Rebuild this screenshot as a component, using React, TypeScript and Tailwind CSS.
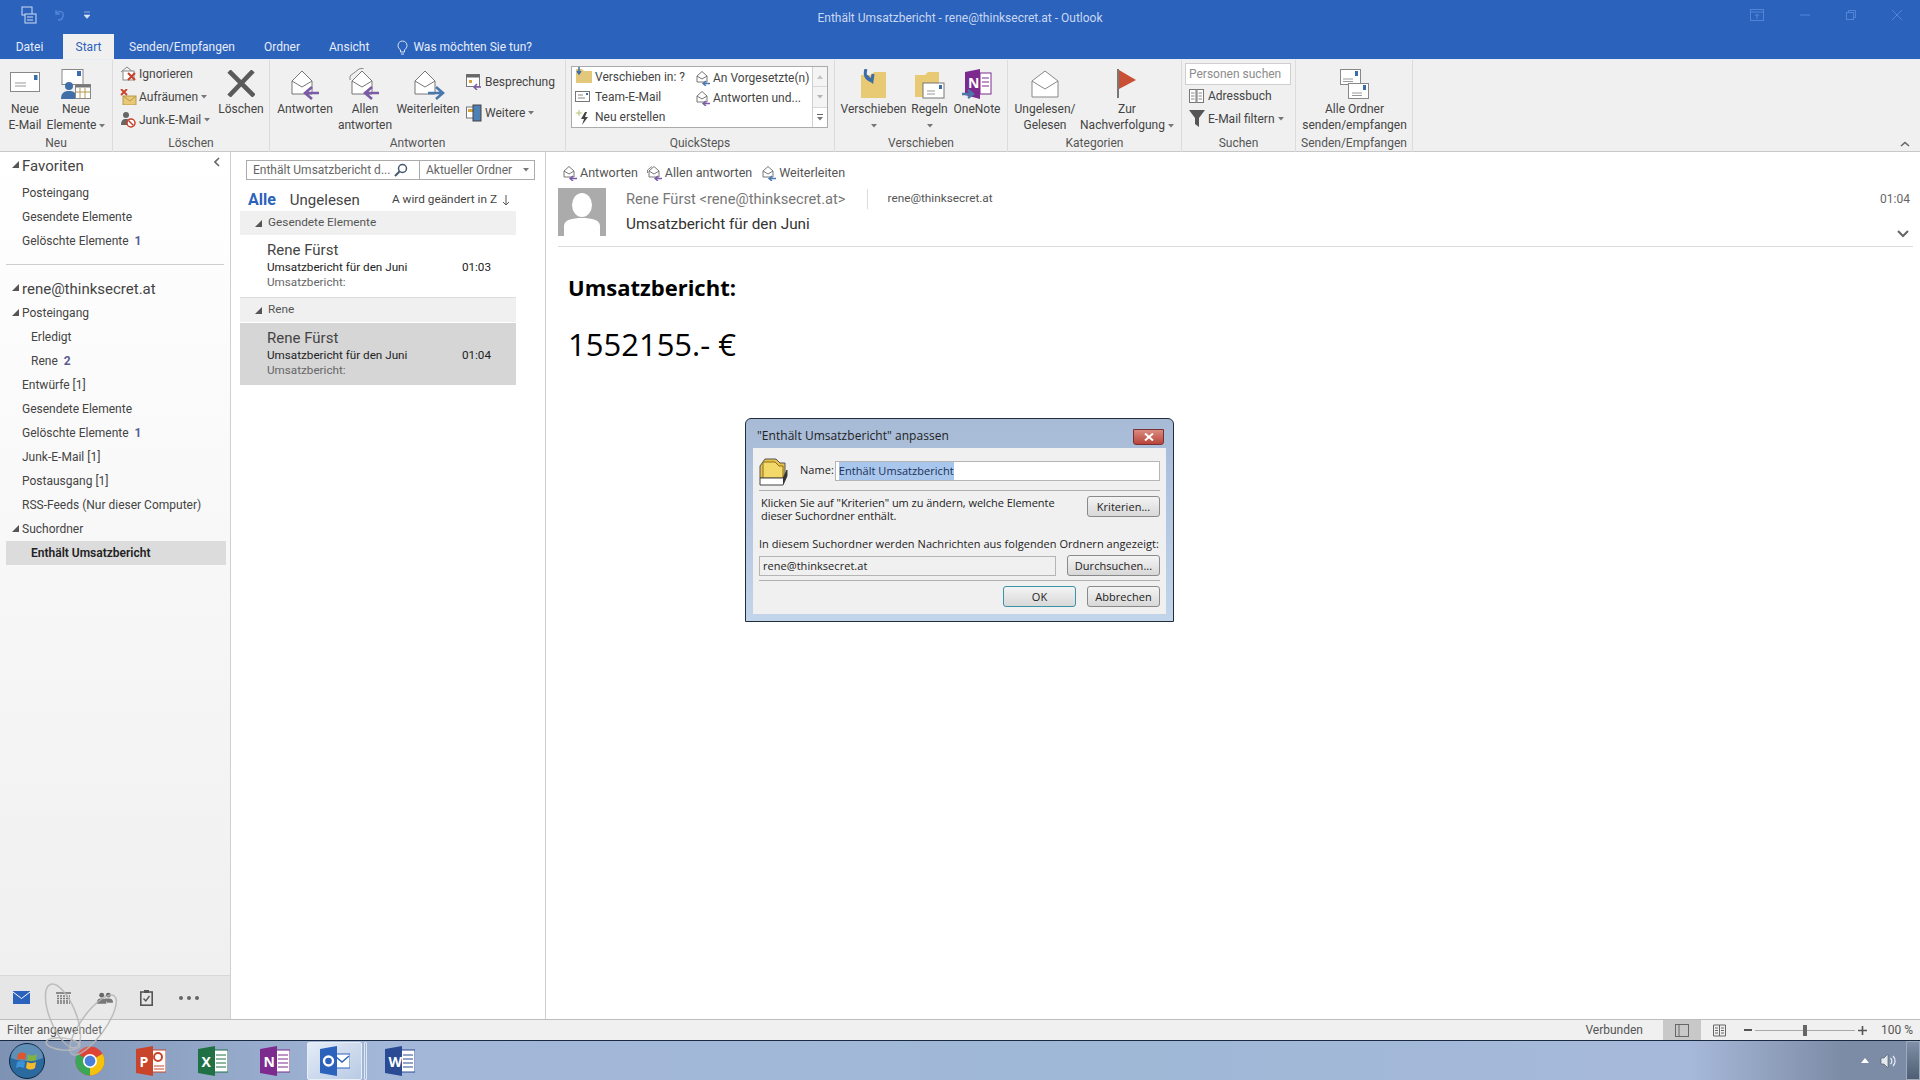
import type { ReactNode } from "react";

function Tri() {
  return (
    <svg width="7" height="7" viewBox="0 0 7 7" className="shrink-0">
      <path d="M7 0V7H0Z" fill="#555" />
    </svg>
  );
}

function Caret({ className = "" }: { className?: string }) {
  return (
    <svg width="6" height="4" viewBox="0 0 6 4" className={`inline-block ${className}`}>
      <path d="M0 0H6L3 3.5Z" fill="#777" />
    </svg>
  );
}

function Env({ arrow, all }: { arrow?: "reply" | "fwd"; all?: boolean }) {
  return (
    <svg width="34" height="32" viewBox="0 0 34 32">
      {all && <path d="M2 12V8L11 1L16 0" fill="none" stroke="#888" />}
      <path d="M4 13L14 3L24 13V26H4Z" fill="#fff" stroke="#777" />
      <path d="M4 13L14 19L24 13" fill="none" stroke="#777" />
      {arrow === "reply" && <path d="M31 25H19M24 19L17 25L24 31" fill="none" stroke="#7b5ba6" strokeWidth="2.6" />}
      {arrow === "fwd" && <path d="M17 25H30M25 19L32 25L25 31" fill="none" stroke="#4a78ad" strokeWidth="2.6" />}
    </svg>
  );
}

function MiniEnv({ arrow, all }: { arrow: string; all?: boolean }) {
  return (
    <svg width="16" height="16" viewBox="0 0 16 16" className="shrink-0">
      {all && <path d="M0.5 8V5L5 1.5" fill="none" stroke="#888" />}
      <path d="M2 6L7 1.5L12 6V12H2Z" fill="#fff" stroke="#777" />
      <path d="M2 6L7 9L12 6" fill="none" stroke="#777" />
      <path d="M8 13.5H15M11 11L8 13.5L11 16" fill="none" stroke={arrow} strokeWidth="1.4" />
    </svg>
  );
}

function Mail({ w = 30, h = 20 }: { w?: number; h?: number }) {
  return (
    <svg width={w} height={h} viewBox="0 0 30 20" className="-mt-[3px]">
      <rect x="0.5" y="0.5" width="29" height="19" fill="#fff" stroke="#888" />
      <rect x="24" y="3" width="3.5" height="5" fill="#3b6cab" />
      <path d="M5 11H16M5 14H16" stroke="#999" />
    </svg>
  );
}

function Big({ w, label, icon, caret, line2 }: { w: number; label: ReactNode; icon: ReactNode; caret?: boolean; line2?: ReactNode }) {
  return (
    <div className="flex flex-col items-center shrink-0" style={{ width: w }}>
      <div className="h-[35px] flex items-center justify-center">{icon}</div>
      <div className="leading-[16px] text-center whitespace-nowrap">{label}</div>
      <div className="leading-[16px] text-center whitespace-nowrap h-[16px]">
        {line2} {caret && <Caret className="align-middle" />}
      </div>
    </div>
  );
}

function Small({ icon, label, caret }: { icon: ReactNode; label: string; caret?: boolean }) {
  return (
    <div className="flex items-center h-[23px] whitespace-nowrap">
      <div className="w-[19px] flex items-center shrink-0">{icon}</div>
      <span>{label}</span>
      {caret && <Caret className="ml-[3px]" />}
    </div>
  );
}

function Group({ w, label, children, border = true }: { w: number; label: string; children: ReactNode; border?: boolean }) {
  return (
    <div className={`shrink-0 flex flex-col h-[92px] ${border ? "border-r border-[#dcdcdc]" : ""}`} style={{ width: w }}>
      <div className="h-[75px] pt-[6px] flex">{children}</div>
      <div className="text-center text-[#555] leading-[16px]">{label}</div>
    </div>
  );
}

function Ribbon() {
  return (
    <div className="h-[93px] bg-[#f0f0f0] border-b border-[#c8c8c8] flex text-[12px] text-[#444] border-t border-t-[#e8ecf6] relative">
      <Group w={113} label="Neu">
        <Big w={50} label="Neue" line2="E-Mail" icon={<Mail />} />
        <Big w={52} label="Neue" line2="Elemente" caret icon={
          <svg width="30" height="30" viewBox="0 0 30 30">
            <rect x="1" y="0.5" width="21" height="15" fill="#fff" stroke="#888" />
            <rect x="16" y="2" width="4" height="5" fill="#3b6cab" />
            <circle cx="8" cy="17" r="4" fill="#3f6ea8" />
            <path d="M0 30C0 23 4 22 8 22S16 23 16 30Z" fill="#3f6ea8" />
            <rect x="14.5" y="15.5" width="15" height="14" fill="#fff" stroke="#888" />
            <rect x="14.5" y="15.5" width="15" height="3" fill="#777" />
            <path d="M19 19V29M24 19V29M15 23H29" stroke="#b79a4e" />
          </svg>
        } />
      </Group>
      <Group w={157} label="Löschen">
        <div className="w-[100px] pl-[7px] -mt-[4px] shrink-0">
          <Small label="Ignorieren" icon={
            <svg width="17" height="15" viewBox="0 0 17 15"><path d="M1 6L7 1L13 6" fill="none" stroke="#888" /><rect x="3" y="5" width="11" height="9" fill="#fff" stroke="#888" /><path d="M8 7L15 14M15 7L8 14" stroke="#c8402a" strokeWidth="2" /></svg>
          } />
          <Small label="Aufräumen" caret icon={
            <svg width="17" height="16" viewBox="0 0 17 16"><rect x="3" y="7" width="13" height="9" fill="#e9c877" stroke="#b79a4e" /><path d="M1 0L7 6M7 0L1 6" stroke="#c8402a" strokeWidth="1.8" /><path d="M3 7L10 12L16 7" fill="none" stroke="#b79a4e" /></svg>
          } />
          <Small label="Junk-E-Mail" caret icon={
            <svg width="17" height="17" viewBox="0 0 17 17"><circle cx="6" cy="4" r="3" fill="#666" /><path d="M1 14C1 9 3 8 6 8S10 9 10 12V14Z" fill="#666" /><circle cx="11" cy="12" r="4" fill="#fff" stroke="#c8402a" strokeWidth="1.5" /><path d="M8.5 9.5L13.5 14.5" stroke="#c8402a" strokeWidth="1.5" /></svg>
          } />
        </div>
        <Big w={56} label="Löschen" icon={
          <svg width="28" height="27" viewBox="0 0 28 27"><path d="M2 1L27 26M26 1L2 26" stroke="#5a5a5a" strokeWidth="4.6" /></svg>
        } />
      </Group>
      <Group w={296} label="Antworten">
        <Big w={70} label="Antworten" icon={<Env arrow="reply" />} />
        <Big w={50} label="Allen" line2="antworten" icon={<Env arrow="reply" all />} />
        <Big w={76} label="Weiterleiten" icon={<Env arrow="fwd" />} />
        <div className="pt-[4px]">
          <Small label="Besprechung" icon={
            <svg width="16" height="16" viewBox="0 0 16 16"><rect x="0.5" y="0.5" width="13" height="12" fill="#fff" stroke="#777" /><rect x="0.5" y="0.5" width="13" height="3" fill="#666" /><rect x="3" y="6" width="3" height="3" fill="#d6a437" /><path d="M15 13H8M11 10L8 13L11 16" fill="none" stroke="#7b5ba6" strokeWidth="1.5" /></svg>
          } />
          <div className="h-[8px]" />
          <Small label="Weitere" caret icon={
            <svg width="16" height="18" viewBox="0 0 16 18"><rect x="0.5" y="3" width="8" height="11" fill="#fff" stroke="#777" /><rect x="2" y="5" width="5" height="3" fill="#d6a437" /><rect x="7" y="1" width="8" height="16" fill="#4e7fb5" stroke="#444" /></svg>
          } />
        </div>
      </Group>
      <Group w={269} label="QuickSteps">
        <div className="ml-[5px] w-[257px] h-[62px] bg-white border border-[#ababab] flex">
          <div className="w-[120px] shrink-0 pl-[3px] flex flex-col justify-center">
            <div className="flex items-center h-[20px]"><svg width="19" height="17" viewBox="0 0 19 17" className="shrink-0 mr-[1px] -mt-[3px]"><path d="M1 2H7L9 4H17V16H1Z" fill="#e3c77a" /><path d="M4 0V6M2 4L4 7L6 4" fill="none" stroke="#3b6cab" strokeWidth="1.5" /></svg>Verschieben in: ?</div>
            <div className="flex items-center h-[20px]"><svg width="19" height="12" viewBox="0 0 19 12" className="shrink-0 mr-[1px]"><rect x="0.5" y="0.5" width="14" height="10" fill="#fff" stroke="#777" /><path d="M3 4H8M3 7H10" stroke="#888" /><rect x="11" y="2" width="2" height="2" fill="#3b6cab" /></svg>Team-E-Mail</div>
            <div className="flex items-center h-[20px]"><svg width="19" height="16" viewBox="0 0 19 16" className="shrink-0 mr-[1px]"><path d="M4 0L5 3L8 4L5 5L4 8L3 5L0 4L3 3Z" fill="#c9d39a" /><path d="M10 3L6 10H9L7 16L13 8H10L12 3Z" fill="#444" /></svg>Neu erstellen</div>
          </div>
          <div className="flex-1 pl-[3px] flex flex-col pt-[1px]">
            <div className="flex items-center h-[20px] gap-[2px]"><MiniEnv arrow="#4a78ad" />An Vorgesetzte(n)</div>
            <div className="flex items-center h-[20px] gap-[2px]"><MiniEnv arrow="#7b5ba6" />Antworten und...</div>
          </div>
          <div className="w-[15px] border-l border-[#d0d0d0] flex flex-col shrink-0 bg-[#f4f4f4]">
            <div className="flex-1 border-b border-[#d8d8d8] flex items-center justify-center"><svg width="6" height="4" viewBox="0 0 6 4"><path d="M0 4H6L3 0Z" fill="#c4c4c4" /></svg></div>
            <div className="flex-1 border-b border-[#d8d8d8] flex items-center justify-center"><Caret className="opacity-50" /></div>
            <div className="flex-1 flex flex-col items-center justify-center gap-[2px] bg-white"><div className="w-[6px] h-px bg-[#666]" /><Caret /></div>
          </div>
        </div>
      </Group>
      <Group w={173} label="Verschieben">
        <Big w={77} label="Verschieben" caret icon={
          <svg width="30" height="30" viewBox="0 0 30 30"><path d="M2 6H12L15 3H27V29H2Z" fill="#e8c974" /><path d="M7 0C5 6 7 10 13 12M6 6L13 12L14 5" fill="none" stroke="#3d6da6" strokeWidth="3" /></svg>
        } />
        <Big w={35} label="Regeln" caret icon={
          <svg width="30" height="30" viewBox="0 0 30 30"><path d="M0 6H10L13 3H24V28H0Z" fill="#e8c974" /><rect x="8" y="14" width="21" height="15" fill="#fff" stroke="#777" /><path d="M12 22H20M12 25H20" stroke="#999" /><rect x="24" y="16" width="3" height="4" fill="#3b6cab" /></svg>
        } />
        <Big w={60} label="OneNote" icon={
          <svg width="30" height="30" viewBox="0 0 30 30"><path d="M3 3L18 0V30L3 26Z" fill="#7d2a8e" /><rect x="18" y="4" width="11" height="21" fill="#fff" stroke="#7d2a8e" /><path d="M20 9H27M20 13H27M20 17H27" stroke="#7d2a8e" /><text x="6" y="19" fontSize="14" fontWeight="700" fill="#fff" fontFamily="Open Sans">N</text><path d="M0 25H10M6 21L11 25L6 29" fill="none" stroke="#4a78ad" strokeWidth="2.4" /></svg>
        } />
      </Group>
      <Group w={174} label="Kategorien">
        <Big w={74} label="Ungelesen/" line2="Gelesen" icon={
          <svg width="28" height="28" viewBox="0 0 28 28"><path d="M1 11L14 1L27 11V27H1Z" fill="#fff" stroke="#888" /><path d="M1 11L14 19L27 11" fill="none" stroke="#888" /></svg>
        } />
        <Big w={90} label="Zur" line2="Nachverfolgung" caret icon={
          <svg width="22" height="30" viewBox="0 0 22 30"><path d="M2 0V29" stroke="#777" strokeWidth="2" /><path d="M3 1L20 11L3 20Z" fill="#c94f35" /></svg>
        } />
      </Group>
      <Group w={114} label="Suchen">
        <div className="pl-[3px] flex flex-col -mt-[3px]">
          <div className="w-[106px] h-[22px] bg-white border border-[#cfcfcf] pl-[3px] leading-[20px] text-[#8c8c8c]">Personen suchen</div>
          <div className="pl-[4px] -mt-[1px]">
            <Small label="Adressbuch" icon={
              <svg width="16" height="14" viewBox="0 0 16 14"><rect x="0.5" y="0.5" width="6.5" height="13" fill="#fff" stroke="#777" /><rect x="8" y="0.5" width="6.5" height="13" fill="#fff" stroke="#777" /><path d="M2 4H5.5M2 7H5.5M2 10H5.5M9.5 4H13M9.5 7H13M9.5 10H13" stroke="#888" /></svg>
            } />
            <Small label="E-Mail filtern" caret icon={
              <svg width="16" height="17" viewBox="0 0 16 17"><path d="M0 0H16L10 8V17L6 14V8Z" fill="#555" /></svg>
            } />
          </div>
        </div>
      </Group>
      <Group w={117} label="Senden/Empfangen">
        <Big w={117} label="Alle Ordner" line2="senden/empfangen" icon={
          <svg width="30" height="30" viewBox="0 0 30 30"><rect x="0.5" y="0.5" width="20" height="15" fill="#fff" stroke="#888" /><rect x="15" y="2" width="3" height="5" fill="#3b6cab" /><path d="M3 10H13M3 12.5H13" stroke="#999" /><rect x="8.5" y="14.5" width="20" height="15" fill="#fff" stroke="#888" /><rect x="23" y="16" width="3" height="5" fill="#3b6cab" /><path d="M12 24H22M12 26.5H22" stroke="#999" /></svg>
        } />
      </Group>
      <svg width="10" height="6" viewBox="0 0 10 6" className="absolute right-[10px] top-[81px]"><path d="M1 5L5 1.5L9 5" fill="none" stroke="#666" strokeWidth="1.6" /></svg>
    </div>
  );
}

function TitleBar() {
  return (
    <div className="h-[59px] bg-[#2b62bb] text-white relative shrink-0">
      <div className="h-[29px] flex items-center relative">
        <svg width="18" height="18" viewBox="0 0 18 18" className="ml-[20px]"><rect x="2" y="1" width="10" height="8" fill="none" stroke="#cfdcf2" /><rect x="5" y="8" width="11" height="9" fill="#2b62bb" stroke="#cfdcf2" /><path d="M7 11H13M7 14H13" stroke="#cfdcf2" /></svg>
        <svg width="12" height="12" viewBox="0 0 12 12" className="ml-[15px]"><path d="M3 5C5 1 11 2 10 7S6 11 5 11M3 1V5H7" fill="none" stroke="#5285d8" strokeWidth="1.4" /></svg>
        <svg width="6" height="8" viewBox="0 0 6 8" className="ml-[19px]"><path d="M0 1H6M0 4H6L3 7.5Z" fill="#dbe5f5" stroke="#dbe5f5" strokeWidth="0.6" /></svg>
        <div className="absolute left-0 right-0 text-center text-[12px] text-[#c9d8f2] top-[9px] leading-[18px]">Enthält Umsatzbericht - rene@thinksecret.at - Outlook</div>
        <div className="ml-auto flex items-center gap-[36px] pr-[18px]">
          <svg width="14" height="12" viewBox="0 0 14 12"><rect x="0.5" y="0.5" width="13" height="11" fill="none" stroke="#5285d8" /><path d="M0 3H14M7 10V5M5 7L7 5L9 7" fill="none" stroke="#5285d8" /></svg>
          <svg width="10" height="2" viewBox="0 0 10 2"><path d="M0 1H10" stroke="#5285d8" /></svg>
          <svg width="10" height="10" viewBox="0 0 10 10"><rect x="0.5" y="2.5" width="7" height="7" fill="none" stroke="#5285d8" /><path d="M2.5 2.5V0.5H9.5V7.5H7.5" fill="none" stroke="#5285d8" /></svg>
          <svg width="10" height="10" viewBox="0 0 10 10"><path d="M0 0L10 10M10 0L0 10" stroke="#5285d8" /></svg>
        </div>
      </div>
      <div className="h-[30px] flex text-[12px] text-[#e6edf9] items-end">
        <div className="w-[59px] text-center h-[25px] leading-[26px]">Datei</div>
        <div className="ml-[4px] w-[51px] text-center h-[25px] leading-[26px] bg-[#f0f0f0] text-[#2b62bb]">Start</div>
        <div className="ml-[15px] h-[25px] leading-[26px]">Senden/Empfangen</div>
        <div className="ml-[29px] h-[25px] leading-[26px]">Ordner</div>
        <div className="ml-[29px] h-[25px] leading-[26px]">Ansicht</div>
        <div className="ml-[28px] h-[25px] flex items-center gap-[5px] pt-[1px]">
          <svg width="11" height="15" viewBox="0 0 11 15"><path d="M3.5 10C2 8.5 1 7.5 1 5.5A4.5 4.5 0 0 1 10 5.5C10 7.5 9 8.5 7.5 10V12H3.5ZM4 14H7" fill="none" stroke="#dbe5f5" /></svg>
          Was möchten Sie tun?
        </div>
      </div>
    </div>
  );
}

function Row({ label, indent = 1, count, tri, bold, big }: { label: string; indent?: number; count?: string; tri?: boolean; bold?: boolean; big?: boolean }) {
  return (
    <div className={`flex items-center relative ml-[6px] mr-[4px] whitespace-nowrap ${bold ? "bg-[#dcdcdc] font-semibold text-[#222]" : "text-[#444]"} ${big ? "h-[25px] pt-[2px] text-[15px]" : "h-[24px] text-[12px]"} ${indent === 2 ? "pl-[25px]" : "pl-[16px]"}`}>
      {tri && <span className="absolute left-[6px] top-[8px]"><Tri /></span>}
      {label}
      {count && <span className="ml-[6px] font-bold text-[#5c5c94]">{count}</span>}
    </div>
  );
}

function NavPane() {
  return (
    <div className="w-[231px] shrink-0 border-r border-[#d0d0d0] flex flex-col bg-linear-to-b from-white via-[#f7f7f7] to-[#efefef]">
      <div className="pt-[1px] relative">
        <Row label="Favoriten" big tri />
        <svg width="6" height="10" viewBox="0 0 6 10" className="absolute left-[214px] top-[5px]"><path d="M5 1L1 5L5 9" fill="none" stroke="#666" strokeWidth="1.6" /></svg>
      </div>
      <div className="mt-[3px]">
        <Row label="Posteingang" />
        <Row label="Gesendete Elemente" />
        <Row label="Gelöschte Elemente" count="1" />
      </div>
      <div className="mx-[6px] mt-[11px] h-px bg-[#cfcfcf]" />
      <div className="mt-[11px]">
        <Row label="rene@thinksecret.at" big tri />
        <Row label="Posteingang" tri />
        <Row label="Erledigt" indent={2} />
        <Row label="Rene" indent={2} count="2" />
        <Row label="Entwürfe [1]" />
        <Row label="Gesendete Elemente" />
        <Row label="Gelöschte Elemente" count="1" />
        <Row label="Junk-E-Mail [1]" />
        <Row label="Postausgang [1]" />
        <Row label="RSS-Feeds (Nur dieser Computer)" />
        <Row label="Suchordner" tri />
        <Row label="Enthält Umsatzbericht" indent={2} bold />
      </div>
      <div className="mt-auto h-[44px] bg-[#e6e6e6] border-t border-[#d8d8d8] flex items-center shrink-0">
        <svg width="17" height="13" viewBox="0 0 17 13" className="ml-[13px]"><rect width="17" height="13" fill="#2b62bb" /><path d="M0 1L8.5 7.5L17 1" fill="none" stroke="#fff" /></svg>
        <svg width="15" height="12" viewBox="0 0 15 12" className="ml-[26px]"><rect width="15" height="2" fill="#8a8a8a" /><path d="M1 4H14M1 6.5H14M1 9H14M1 11H14" stroke="#777" strokeDasharray="2 1" strokeWidth="1.5" /></svg>
        <svg width="16" height="12" viewBox="0 0 17 12" className="ml-[26px]"><circle cx="5" cy="3" r="2.6" fill="#666" /><circle cx="12" cy="3" r="2.6" fill="#666" /><path d="M0 12C0 7 2 6.5 5 6.5S10 7 10 12ZM8 6.8C9 6.5 10 6.5 12 6.5C15 6.5 17 7 17 11H11Z" fill="#666" /></svg>
        <svg width="13" height="16" viewBox="0 0 13 16" className="ml-[27px]"><rect x="0.8" y="2" width="11.4" height="13.2" fill="none" stroke="#555" strokeWidth="1.6" /><rect x="4" y="0" width="5" height="3" fill="#555" /><path d="M3.5 8.5L5.8 11L9.5 6" fill="none" stroke="#555" strokeWidth="1.4" /></svg>
        <div className="ml-[26px] flex gap-[4px]">
          <span className="w-[4px] h-[4px] rounded-full bg-[#666]" /><span className="w-[4px] h-[4px] rounded-full bg-[#666]" /><span className="w-[4px] h-[4px] rounded-full bg-[#666]" />
        </div>
      </div>
    </div>
  );
}

function GroupHead({ label }: { label: string }) {
  return (
    <div className="h-[24px] bg-[#f0f0f0] flex items-center gap-[6px] pl-[15px] text-[11.8px] text-[#555]">
      <Tri />
      {label}
    </div>
  );
}

function MailItem({ time, selected }: { time: string; selected?: boolean }) {
  return (
    <div className={`h-[62px] pl-[27px] pr-[25px] ${selected ? "bg-[#d6d6d6]" : ""}`}>
      <div className="text-[15px] leading-[20px] pt-[5px] h-[25px] text-[#444]">Rene Fürst</div>
      <div className="flex justify-between text-[11.7px] leading-[15px] text-[#222]">
        <span>Umsatzbericht für den Juni</span>
        <span>{time}</span>
      </div>
      <div className="text-[11.7px] leading-[15px] text-[#666]">Umsatzbericht:</div>
    </div>
  );
}

function ListPane() {
  return (
    <div className="w-[315px] shrink-0 border-r border-[#d0d0d0]">
      <div className="ml-[15px] mt-[8px] w-[289px] h-[20px] border border-[#ababab] flex text-[12px] text-[#666] leading-[18px]">
        <div className="w-[173px] border-r border-[#ababab] flex items-center justify-between pl-[6px] pr-[11px]">
          <span className="whitespace-nowrap">Enthält Umsatzbericht d...</span>
          <svg width="14" height="14" viewBox="0 0 14 14"><circle cx="8.5" cy="5.5" r="4" fill="none" stroke="#45586f" strokeWidth="1.5" /><path d="M5.5 8.5L1 13" stroke="#45586f" strokeWidth="2" /></svg>
        </div>
        <div className="flex-1 flex items-center justify-between pl-[6px] pr-[5px]">
          <span>Aktueller Ordner</span>
          <Caret />
        </div>
      </div>
      <div className="h-[31px] pt-[9px] flex items-center pl-[17px] relative">
        <span className="text-[16px] font-bold text-[#2b62bb]">Alle</span>
        <span className="text-[15px] text-[#444] ml-[14px]">Ungelesen</span>
        <span className="absolute left-[161px] text-[11.8px] text-[#444] whitespace-nowrap">A wird geändert in Z</span>
        <svg width="8" height="11" viewBox="0 0 8 11" className="absolute left-[271px]"><path d="M4 0V10M1 7L4 10L7 7" fill="none" stroke="#555" strokeWidth="1" /></svg>
      </div>
      <div className="ml-[9px] w-[276px]">
        <GroupHead label="Gesendete Elemente" />
        <MailItem time="01:03" />
        <div className="border-t border-[#dcdcdc]" />
        <GroupHead label="Rene" />
        <div className="h-px" />
        <MailItem time="01:04" selected />
      </div>
    </div>
  );
}

function ActionBtn({ label, arrow, all }: { label: string; arrow: string; all?: boolean }) {
  return (
    <div className="flex items-center gap-[2px] text-[12.5px] text-[#555]">
      <MiniEnv arrow={arrow} all={all} />
      {label}
    </div>
  );
}

function ReadingPane() {
  return (
    <div className="flex-1 min-w-0 pl-[12px] pr-[7px]">
      <div className="h-[20px] mt-[11px] pl-[4px] flex items-center gap-[9px]">
        <ActionBtn label="Antworten" arrow="#7b5ba6" />
        <ActionBtn label="Allen antworten" arrow="#7b5ba6" all />
        <ActionBtn label="Weiterleiten" arrow="#4a78ad" />
      </div>
      <div className="mt-[5px] flex pb-[10px] border-b border-[#dcdcdc]">
        <svg width="48" height="48" viewBox="0 0 48 48" className="shrink-0">
          <rect width="48" height="48" fill="#ababab" />
          <ellipse cx="24" cy="17" rx="10" ry="12" fill="#fff" />
          <path d="M6 48V38C6 32 14 30 24 30S42 32 42 38V48Z" fill="#fff" />
        </svg>
        <div className="flex-1 pl-[20px] pr-[3px] min-w-0">
          <div className="flex items-center h-[22px]">
            <span className="text-[14.7px] text-[#777]">Rene Fürst &lt;rene@thinksecret.at&gt;</span>
            <span className="w-px h-[20px] bg-[#dcdcdc] ml-[21px] mr-[20px]" />
            <span className="text-[11.8px] text-[#555]">rene@thinksecret.at</span>
            <span className="ml-auto text-[12px] text-[#666]">01:04</span>
          </div>
          <div className="flex items-center justify-between h-[26px] pt-[2px]">
            <span className="text-[15.3px] text-[#333]">Umsatzbericht für den Juni</span>
            <svg width="12" height="8" viewBox="0 0 12 8" className="mr-[1px] mt-[20px]"><path d="M1 1L6 6L11 1" fill="none" stroke="#666" strokeWidth="2" /></svg>
          </div>
        </div>
      </div>
      <div className="pl-[10px] text-black font-['Open_Sans',sans-serif]">
        <div className="text-[22px] font-bold leading-[32px] mt-[24px]">Umsatzbericht:</div>
        <div className="text-[31px] leading-[44px] mt-[19px]">1552155.- €</div>
      </div>
    </div>
  );
}

function DlgButton({ label, primary, w = 73 }: { label: string; primary?: boolean; w?: number }) {
  return (
    <div className={`h-[21px] rounded-[3px] border text-center leading-[19px] shrink-0 bg-linear-to-b from-[#f4f4f4] to-[#d8d8d8] ${primary ? "border-[#3c93a8]" : "border-[#8a8a8a]"}`} style={{ width: w }}>
      {label}
    </div>
  );
}

function Dialog() {
  return (
    <div className="absolute left-[745px] top-[418px] w-[429px] h-[204px] rounded-t-[6px] border border-[#1f2d3d] bg-linear-to-b from-[#a7bad6] to-[#c3d5ea] px-[7px] pb-[7px] flex flex-col text-[11px] tracking-[0.04px] text-[#222] font-['Open_Sans',sans-serif]">
      <div className="h-[29px] pt-[5px] flex items-center pl-[4px] text-[12px] text-[#222] relative shrink-0">
        "Enthält Umsatzbericht" anpassen
        <div className="absolute right-[2px] top-[10px] w-[31px] h-[16px] rounded-b-[3px] border border-[#7a3030] bg-linear-to-b from-[#d98a80] to-[#b8433a] flex items-center justify-center">
          <svg width="10" height="8" viewBox="0 0 10 8"><path d="M1 0.5L9 7.5M9 0.5L1 7.5" stroke="#fff" strokeWidth="2" /></svg>
        </div>
      </div>
      <div className="flex-1 bg-[#f0f0f0] px-[6px] flex flex-col">
        <div className="flex items-center h-[42px] pt-[3px] shrink-0">
          <svg width="30" height="30" viewBox="0 0 30 30" className="shrink-0">
            <path d="M1 10L6 3H17L21 7H26V22H1Z" fill="#e8c148" stroke="#555" />
            <path d="M4 6H16L20 10H24V22H4Z" fill="#f3d86a" stroke="#8a7020" />
            <path d="M1 22H24L28 14V20L24 29H1Z" fill="#fff" stroke="#444" />
            <path d="M24 29L28 20V14L24 22Z" fill="#333" />
          </svg>
          <span className="ml-[11px] mr-[1px]">Name:</span>
          <div className="flex-1 h-[20px] bg-white border border-[#b5b5b5] leading-[18px] pl-[3px]">
            <span className="bg-[#a9c7ec] text-[#1b2f57] inline-block">Enthält Umsatzbericht</span>
          </div>
        </div>
        <div className="h-px bg-[#b0b0b0] shrink-0" />
        <div className="flex items-start justify-between mt-[5px] pl-[2px] shrink-0">
          <div className="leading-[13px] whitespace-nowrap tracking-[-0.05px]">Klicken Sie auf "Kriterien" um zu ändern, welche Elemente<br />dieser Suchordner enthält.</div>
          <DlgButton label="Kriterien..." />
        </div>
        <div className="mt-[15px] leading-[14px] whitespace-nowrap shrink-0">In diesem Suchordner werden Nachrichten aus folgenden Ordnern angezeigt:</div>
        <div className="flex items-end justify-between mt-[4px] shrink-0">
          <div className="w-[297px] h-[20px] border border-[#b5b5b5] leading-[18px] pl-[3px]">rene@thinksecret.at</div>
          <DlgButton label="Durchsuchen..." w={93} />
        </div>
        <div className="h-px bg-[#b0b0b0] mt-[4px] shrink-0" />
        <div className="flex justify-end gap-[11px] mt-[5px] shrink-0">
          <DlgButton label="OK" primary />
          <DlgButton label="Abbrechen" />
        </div>
      </div>
    </div>
  );
}

function StatusBar() {
  return (
    <div className="h-[21px] shrink-0 bg-[#f0f0f0] border-t border-[#bdbdbd] flex items-center text-[12px] text-[#555]">
      <span className="pl-[7px]">Filter angewendet</span>
      <span className="ml-auto">Verbunden</span>
      <div className="ml-[20px] w-[38px] h-full bg-[#c8c8c8] flex items-center justify-center">
        <svg width="14" height="13" viewBox="0 0 14 13"><rect x="0.5" y="0.5" width="13" height="12" fill="none" stroke="#666" /><path d="M4 0V13" stroke="#666" /></svg>
      </div>
      <svg width="13" height="13" viewBox="0 0 13 13" className="ml-[12px]"><path d="M0.5 1H6.5V12H0.5ZM6.5 1H12.5V12H6.5ZM2 4H5M2 6.5H5M2 9H5M8 4H11M8 6.5H11M8 9H11" fill="none" stroke="#666" /></svg>
      <div className="ml-[18px] w-[8px] h-[2px] bg-[#555]" />
      <div className="ml-[3px] w-[100px] h-px bg-[#aaa] relative">
        <div className="absolute left-[48px] -top-[5px] w-[4px] h-[11px] bg-[#666]" />
      </div>
      <svg width="9" height="9" viewBox="0 0 9 9" className="ml-[3px]"><path d="M0 4.5H9M4.5 0V9" stroke="#555" strokeWidth="1.6" /></svg>
      <span className="ml-[14px] w-[39px] whitespace-nowrap">100 %</span>
    </div>
  );
}

function AppTile({ bg, letter, lines = true, children }: { bg: string; letter: string; lines?: boolean; children?: ReactNode }) {
  return (
    <svg width="30" height="30" viewBox="0 0 30 30">
      <rect x="14" y="4" width="16" height="22" fill="#fff" stroke={bg} />
      {lines && <path d="M18 9H28M18 13H28M18 17H28M18 21H28" stroke={bg} />}
      {children}
      <path d="M0 3L17 0V30L0 27Z" fill={bg} />
      <text x="3.5" y="20.5" fontSize="14" fontWeight="700" fill="#fff" fontFamily="Open Sans">{letter}</text>
    </svg>
  );
}

function Taskbar() {
  return (
    <div className="h-[40px] shrink-0 border-t border-[#1b2a44] bg-[linear-gradient(90deg,#7e92b3,#a3b7d8_20%,#9fb8d6_60%,#a7b9da_88%,#7c8ca6_96%)] flex items-center relative overflow-hidden">
      <svg width="36" height="36" viewBox="0 0 36 36" className="ml-[9px] shrink-0">
        <circle cx="18" cy="18" r="17.5" fill="#2a6a9e" stroke="#10263f" />
        <path d="M2 15A16 14 0 0 1 34 15C26 19 10 19 2 15Z" fill="#fff" fillOpacity="0.25" />
        <path d="M9 11C12 9 14 9 17 11L16 17C13 15.5 11 15.5 8 17Z" fill="#e0562c" />
        <path d="M19 11C22 13 24 13 28 11L27 17C24 18.5 21 18.5 18 17Z" fill="#7cb342" />
        <path d="M8 19C11 17.5 13 17.5 16 19L15 25C12 23.5 10 23.5 7 25Z" fill="#3c92d9" />
        <path d="M18 19C21 20.5 24 20.5 27 19L26 25C23 27 20 27 17 25Z" fill="#f5b92d" />
      </svg>
      <svg width="30" height="30" viewBox="0 0 30 30" className="ml-[30px] shrink-0">
        <circle cx="15" cy="15" r="14.5" fill="#db4437" />
        <path d="M15 15L27.6 7.8A14.5 14.5 0 0 1 15 29.5Z" fill="#f4c20d" />
        <path d="M15 15L15 29.5A14.5 14.5 0 0 1 2.4 7.8Z" fill="#3aa757" />
        <circle cx="15" cy="15" r="7" fill="#fff" />
        <circle cx="15" cy="15" r="5.4" fill="#4a80dc" />
      </svg>
      <div className="ml-[31px] shrink-0 flex"><AppTile bg="#c8452c" letter="P" lines={false}><circle cx="22" cy="11" r="4" fill="none" stroke="#c8452c" strokeWidth="2" /><path d="M18 20H28M18 23H28" stroke="#c8452c" /></AppTile></div>
      <div className="ml-[32px] shrink-0 flex"><AppTile bg="#1f7145" letter="X" /></div>
      <div className="ml-[32px] shrink-0 flex"><AppTile bg="#7d2a8e" letter="N" /></div>
      <div className="ml-[17px] w-[55px] h-[38px] rounded-[2px] border border-[#e8eef8] bg-linear-to-br from-[#e4ecf7] to-[#b8cae4] flex items-center justify-center shrink-0">
        <svg width="30" height="30" viewBox="0 0 30 30">
          <rect x="14" y="8" width="16" height="14" fill="#fff" stroke="#2b62bb" />
          <path d="M15 10L22 16L29 10" fill="none" stroke="#2b62bb" strokeWidth="1.4" />
          <path d="M0 3L17 0V30L0 27Z" fill="#2b62bb" />
          <circle cx="8.5" cy="15" r="4.5" fill="none" stroke="#fff" strokeWidth="2.4" />
        </svg>
      </div>
      <div className="ml-[2px] w-[3px] h-[38px] rounded-[1px] border border-[#dfe7f3] shrink-0" />
      <div className="ml-[18px] shrink-0 flex"><AppTile bg="#2a4a94" letter="W" /></div>
      <div className="ml-auto flex items-center h-full">
        <svg width="8" height="5" viewBox="0 0 8 5"><path d="M0 5L4 0L8 5Z" fill="#fff" /></svg>
        <svg width="17" height="16" viewBox="0 0 17 16" className="ml-[11px]"><path d="M1 5H4L8 1V15L4 11H1Z" fill="#e4e9f1" stroke="#566" strokeWidth="0.7" /><path d="M10.5 5A4 4 0 0 1 10.5 11M13 3A7 7 0 0 1 13 13" fill="none" stroke="#eef" strokeWidth="1.2" /></svg>
        <div className="ml-[9px] w-[14px] h-full border border-[#a0aab8] bg-linear-to-b from-[#8090a8] to-[#4e5e74]" />
      </div>
    </div>
  );
}

export default function App() {
  return (
    <div className="w-[1920px] h-[1080px] flex flex-col overflow-hidden bg-white relative font-['Roboto',sans-serif]">
      <TitleBar />
      <Ribbon />
      <div className="flex-1 flex min-h-0">
        <NavPane />
        <ListPane />
        <ReadingPane />
      </div>
      <StatusBar />
      <Taskbar />
      <Dialog />
      <svg width="90" height="76" viewBox="0 0 90 76" className="absolute left-[38px] top-[982px] pointer-events-none">
        <ellipse cx="25" cy="34" rx="13" ry="34" transform="rotate(-22 25 34)" fill="none" stroke="#b5b5b5" strokeOpacity="0.85" strokeWidth="1.5" />
        <ellipse cx="55" cy="43" rx="12" ry="36" transform="rotate(36 55 43)" fill="#fff" fillOpacity="0.12" stroke="#b5b5b5" strokeOpacity="0.85" strokeWidth="1.5" />
        <ellipse cx="25" cy="62" rx="17" ry="6" transform="rotate(6 25 62)" fill="none" stroke="#bbb" strokeOpacity="0.85" strokeWidth="1.5" />
      </svg>
    </div>
  );
}
